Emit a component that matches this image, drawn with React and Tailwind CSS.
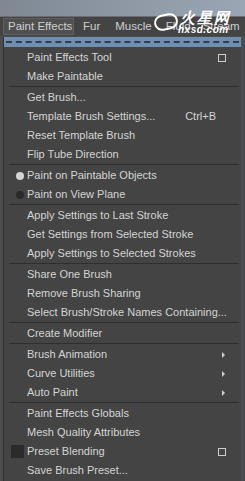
import React from 'react';

const items = [
  { label: 'Paint Effects Tool', box: true },
  { label: 'Make Paintable' },
  'sep',
  { label: 'Get Brush...' },
  { label: 'Template Brush Settings...', shortcut: 'Ctrl+B' },
  { label: 'Reset Template Brush' },
  { label: 'Flip Tube Direction' },
  'sep',
  { label: 'Paint on Paintable Objects', radio: 'on' },
  { label: 'Paint on View Plane', radio: 'off' },
  'sep',
  { label: 'Apply Settings to Last Stroke' },
  { label: 'Get Settings from Selected Stroke' },
  { label: 'Apply Settings to Selected Strokes' },
  'sep',
  { label: 'Share One Brush' },
  { label: 'Remove Brush Sharing' },
  { label: 'Select Brush/Stroke Names Containing...' },
  'sep',
  { label: 'Create Modifier' },
  'sep',
  { label: 'Brush Animation', sub: true },
  { label: 'Curve Utilities', sub: true },
  { label: 'Auto Paint', sub: true },
  'sep',
  { label: 'Paint Effects Globals' },
  { label: 'Mesh Quality Attributes' },
  { label: 'Preset Blending', check: true, box: true },
  { label: 'Save Brush Preset...' },
];

const MenuItem = ({ item }) => (
  <div className="relative flex items-center h-[19px] pl-[23px] pr-[14px]">
    {item.radio && (
      <span
        className={`absolute left-[12px] top-[6px] w-[8px] h-[8px] rounded-full ${
          item.radio === 'on' ? 'bg-[#d6d6d6]' : 'bg-[#2a2a2a]'
        }`}
      />
    )}
    {item.check && (
      <span className="absolute left-[7px] top-[3px] w-[13px] h-[13px] bg-[#2b2b2b]" />
    )}
    <span className="flex-1 whitespace-nowrap">{item.label}</span>
    {item.shortcut && <span className="mr-[11px]">{item.shortcut}</span>}
    {item.box && (
      <span className="w-[8px] h-[8px] border border-[#cfcfcf] mr-[1px]" />
    )}
    {item.sub && (
      <span className="w-0 h-0 border-y-[3px] border-y-transparent border-l-[3px] border-l-[#cfcfcf] mr-[2px]" />
    )}
  </div>
);

export default function App() {
  return (
    <div
      className="relative w-[245px] h-[481px] overflow-hidden bg-[#4a4c50] text-[#d4d4d4] text-[11px] leading-none"
      style={{ fontFamily: '"Liberation Sans", Arial, sans-serif' }}
    >
      <div className="h-[16px] bg-gradient-to-r from-[#7f8893] via-[#8e98a4] to-[#9aa6b4]" />
      <div className="h-[20px] bg-[#444444] border-t border-[#6a6e74] flex items-center pl-[3px] text-[#cfcfcf] text-[11.5px] whitespace-nowrap">
        <span className="h-[17px] w-[71px] px-[4px] flex items-center bg-[#505050] border border-[#5f5f5f]">Paint Effects</span>
        <span className="ml-[9px]">Fur</span>
        <span className="ml-[15px]">Muscle</span>
        <span className="ml-[14px]">Fluid</span>
        <span className="ml-[12px]">Stream</span>
      </div>
      <div className="absolute left-[152px] top-[10px] text-white italic font-bold leading-none pointer-events-none">
        <div className="text-[15px] tracking-[2px] pl-[28px]">火星网</div>
        <div className="text-[10px] pl-[26px] tracking-[0.5px]">hxsd.com</div>
        <div className="absolute left-[2px] top-[4px] w-[24px] h-[16px] rounded-full border-2 border-white -rotate-12" />
      </div>
      <div className="ml-[3px] mr-[4px] bg-[#444444] border-l border-[#2f2f2f] pb-[3px]">
        <div className="h-[10px] bg-[#6f8eb0] flex items-center px-[2px] mt-[1px]">
          <div className="w-full border-t-2 border-dashed border-[#2c3e55]" />
        </div>
        <div className="pt-[1px]">
          {items.map((it, i) =>
            it === 'sep' ? (
              <div key={i} className="h-[2px] ml-[5px] mr-[2px] border-t border-[#2e2e2e]" />
            ) : (
              <MenuItem key={i} item={it} />
            )
          )}
        </div>
      </div>
    </div>
  );
}
